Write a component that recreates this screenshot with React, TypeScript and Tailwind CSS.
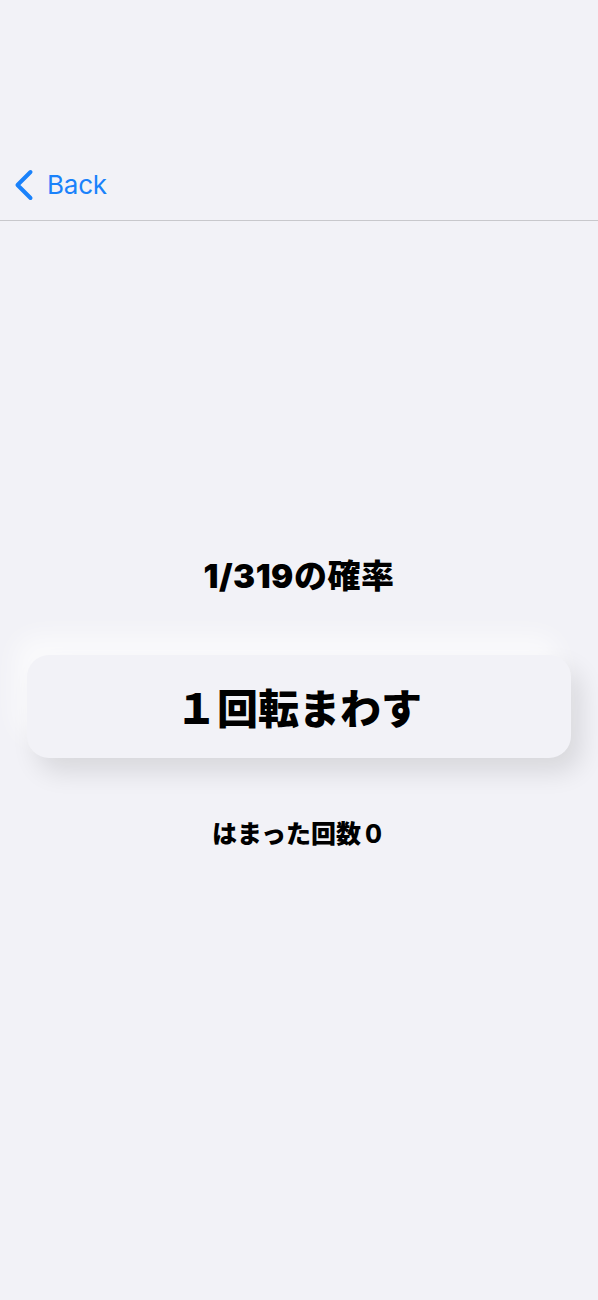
import React from "react";

const jp = { fontFamily: 'Inter, "Noto Sans CJK JP", "Noto Sans", sans-serif' };

export default function App() {
  return (
    <div className="min-h-[1300px] w-full bg-[#f2f2f7]">
      <header className="flex h-[221px] items-end border-b border-[#c8c8cc]">
        <button
          className="mb-[13px] flex h-[44px] items-center gap-[13px] pl-[14px] text-[#1a82fb]"
          style={{ fontFamily: 'Inter, "Liberation Sans", sans-serif' }}
        >
          <svg width="20" height="32" viewBox="0 0 20 32" fill="none">
            <path
              d="M16.5 3 L3.5 16 L16.5 29"
              stroke="currentColor"
              strokeWidth="4"
              strokeLinecap="round"
              strokeLinejoin="round"
            />
          </svg>
          <span className="text-[26px] leading-none tracking-[-0.2px]">Back</span>
        </button>
      </header>

      <main className="flex flex-col items-center" style={jp}>
        <h1 className="mt-[336px] text-[33px] font-black leading-[38px] tracking-[0.5px] text-black">
          1/319の確率
        </h1>

        <button className="mt-[60px] flex h-[103px] w-[544px] items-center justify-center rounded-[22px] bg-[#f2f2f7] shadow-[-12px_-20px_24px_rgba(255,255,255,0.6),10px_14px_26px_rgba(0,0,0,0.11)]">
          <span
            className="text-[41px] font-black leading-none text-black"
            style={{ fontFamily: '"Noto Sans CJK JP", sans-serif' }}
          >
            １回転まわす
          </span>
        </button>

        <p
          className="mt-[59px] text-[25px] font-black leading-[30px] text-black"
          style={{ fontFamily: '"Noto Sans CJK JP", sans-serif' }}
        >
          はまった回数０
        </p>
      </main>
    </div>
  );
}
